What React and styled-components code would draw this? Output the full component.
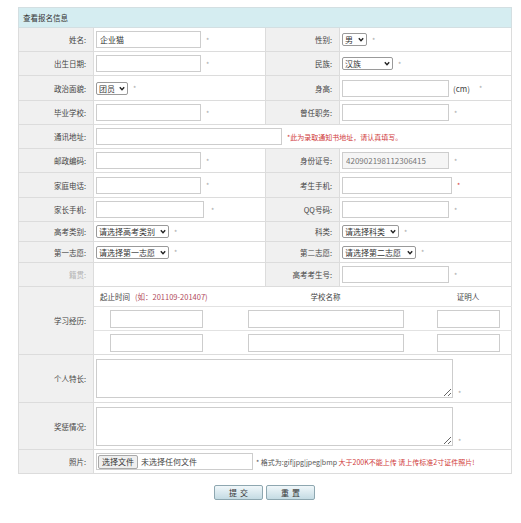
import React from 'react';
import styled, { createGlobalStyle } from 'styled-components';

const Global = createGlobalStyle`
  html, body { margin: 0; padding: 0; background: #fff; }
  body { font-family: "Noto Sans CJK SC", "Noto Sans", sans-serif; }
`;

const Page = styled.div`
  padding: 7px 10px 0 18px;
  width: 493px;
`;

const Form = styled.table`
  width: 493px;
  border-collapse: collapse;
  table-layout: fixed;
  border: 1px solid #d9d9d9;
  font-size: 7.5px;
  color: #444;
`;

const Row = styled.tr`
  height: ${p => p.$h || 24}px;
`;

const Caption = styled.td`
  background: #d5edf1;
  padding: 0 0 0 4px;
  border: 1px solid #d3dfe2;
  color: #333;
  font-size: 7.5px;
  text-align: left;
`;

const Label = styled.th`
  background: #f0f0f0;
  text-align: right;
  font-weight: normal;
  padding: 0 7px 0 0;
  border: 1px solid #dcdcdc;
  color: ${p => (p.$faint ? '#b5b5b5' : '#444')};
  white-space: nowrap;
  font-size: 7.5px;
`;

const Cell = styled.td`
  padding: ${p => (p.$flush ? '0' : '0 0 0 2px')};
  border: 1px solid #dcdcdc;
  background: #fff;
  white-space: nowrap;
  vertical-align: middle;
`;

const Input = styled.input`
  box-sizing: border-box;
  width: ${p => p.$w || 105}px;
  height: ${p => p.$ht || 17}px;
  border: 1px solid #cdcdcd;
  font: 8px "Noto Sans CJK SC", "Noto Sans", sans-serif;
  padding: 0 3px;
  margin: 0;
  color: ${p => (p.$ro ? '#777' : '#333')};
  background: ${p => (p.$ro ? '#f5f5f5' : '#fff')};
  vertical-align: middle;
  outline: none;
`;

const SelectWrap = styled.span`
  position: relative;
  display: inline-block;
  vertical-align: middle;
  height: 13px;
`;

const SelectBox = styled.select`
  appearance: none;
  -webkit-appearance: none;
  box-sizing: border-box;
  width: ${p => p.$w}px;
  height: 13px;
  font: 8px/11px "Noto Sans CJK SC", "Noto Sans", sans-serif;
  color: #333;
  border: 1px solid #9a9a9a;
  border-radius: 2px;
  background: #fff;
  padding: 0 10px 0 2px;
  margin: 0;
  display: block;
  outline: none;
`;

const Chevron = styled.svg`
  position: absolute;
  right: 3px;
  top: 4px;
  width: 6px;
  height: 5px;
  pointer-events: none;
`;

function Select({ w, value }) {
  return (
    <SelectWrap>
      <SelectBox $w={w} defaultValue={value}>
        <option>{value}</option>
      </SelectBox>
      <Chevron viewBox="0 0 6 5">
        <path d="M0.8 1.2 L3 3.6 L5.2 1.2" fill="none" stroke="#222" strokeWidth="1.4" />
      </Chevron>
    </SelectWrap>
  );
}

const Star = styled.span`
  color: ${p => (p.$red ? '#d63a3a' : '#a8a8a8')};
  margin-left: ${p => (p.$ml != null ? p.$ml : 5)}px;
  font-size: 7px;
  vertical-align: middle;
`;

const Unit = styled.span`
  margin-left: 4px;
  font-size: 8px;
  color: #444;
  vertical-align: middle;
`;

const Note = styled.span`
  margin-left: ${p => p.$ml || 0}px;
  color: ${p => (p.$red ? '#d03a3a' : '#555')};
  font-size: 7px;
  vertical-align: middle;
`;

const Study = styled.div`
  display: grid;
  grid-template-columns: 133px 197px 88px;
  grid-template-rows: 20px 24px 23px;
`;

const StudyHead = styled.div`
  display: flex;
  align-items: center;
  justify-content: ${p => (p.$left ? 'flex-start' : 'center')};
  padding-left: ${p => (p.$left ? '6px' : '0')};
  border-bottom: 1px solid #e2e2e2;
  font-size: 7.5px;
  color: #444;
`;

const Hint = styled.span`
  color: #b04a5a;
  margin-left: 5px;
`;

const StudyCellBox = styled.div`
  display: flex;
  align-items: center;
  justify-content: ${p => (p.$start ? 'flex-start' : 'center')};
  padding-left: ${p => p.$pl || 0}px;
  border-bottom: ${p => (p.$last ? 'none' : '1px solid #e2e2e2')};
`;

const TextBox = styled.textarea`
  box-sizing: border-box;
  width: 357px;
  height: 39px;
  border: 1px solid #cdcdcd;
  margin: 0;
  padding: 2px;
  font: 8px "Noto Sans CJK SC", sans-serif;
  vertical-align: bottom;
  resize: both;
`;

const FileBox = styled.span`
  display: inline-flex;
  align-items: center;
  box-sizing: border-box;
  width: 157px;
  height: 17px;
  border: 1px solid #cdcdcd;
  vertical-align: middle;
  padding-left: 1px;
  font-size: 8px;
  color: #444;
`;

const FileBtn = styled.span`
  box-sizing: border-box;
  height: 14px;
  line-height: 12px;
  padding: 0 3px;
  border: 1px solid #a9a9a9;
  border-radius: 2px;
  background: #efefef;
  color: #333;
  margin-right: 3px;
`;

const Actions = styled.div`
  display: flex;
  justify-content: center;
  gap: 3px;
  width: 493px;
  margin-top: 11px;
`;

const Btn = styled.button`
  box-sizing: border-box;
  width: 49px;
  height: 15px;
  padding: 0;
  border: 1px solid #8ea7b0;
  border-radius: 2px;
  background: linear-gradient(#f0f7fa, #c4dbe3);
  font: 8px "Noto Sans CJK SC", sans-serif;
  color: #333;
  letter-spacing: 3px;
  text-indent: 3px;
`;

export default function App() {
  return (
    <Page>
      <Global />
      <Form>
        <colgroup>
          <col style={{ width: 75 }} />
          <col style={{ width: 172 }} />
          <col style={{ width: 74 }} />
          <col style={{ width: 172 }} />
        </colgroup>
        <tbody>
          <Row $h={20}>
            <Caption colSpan={4}>查看报名信息</Caption>
          </Row>
          <Row>
            <Label>姓名:</Label>
            <Cell><Input defaultValue="企业猫" /><Star>*</Star></Cell>
            <Label>性别:</Label>
            <Cell><Select w={25} value="男" /><Star>*</Star></Cell>
          </Row>
          <Row>
            <Label>出生日期:</Label>
            <Cell><Input /><Star>*</Star></Cell>
            <Label>民族:</Label>
            <Cell><Select w={51} value="汉族" /><Star>*</Star></Cell>
          </Row>
          <Row $h={25}>
            <Label>政治面貌:</Label>
            <Cell><Select w={32} value="团员" /><Star>*</Star></Cell>
            <Label>身高:</Label>
            <Cell><Input $w={107} /><Unit>(cm)</Unit><Star $ml={9}>*</Star></Cell>
          </Row>
          <Row>
            <Label>毕业学校:</Label>
            <Cell><Input /><Star>*</Star></Cell>
            <Label>曾任职务:</Label>
            <Cell><Input $w={107} /><Star>*</Star></Cell>
          </Row>
          <Row>
            <Label>通讯地址:</Label>
            <Cell colSpan={3}>
              <Input $w={186} />
              <Note $red $ml={5}>*此为录取通知书地址，请认真填写。</Note>
            </Cell>
          </Row>
          <Row>
            <Label>邮政编码:</Label>
            <Cell><Input /><Star>*</Star></Cell>
            <Label>身份证号:</Label>
            <Cell><Input $w={107} $ro readOnly defaultValue="420902198112306415" /><Star>*</Star></Cell>
          </Row>
          <Row $h={25}>
            <Label>家庭电话:</Label>
            <Cell><Input /><Star>*</Star></Cell>
            <Label>考生手机:</Label>
            <Cell><Input $w={110} /><Star $red>*</Star></Cell>
          </Row>
          <Row>
            <Label>家长手机:</Label>
            <Cell><Input $w={108} /><Star $ml={7}>*</Star></Cell>
            <Label>QQ号码:</Label>
            <Cell><Input $w={107} /><Star>*</Star></Cell>
          </Row>
          <Row $h={20}>
            <Label>高考类别:</Label>
            <Cell><Select w={73} value="请选择高考类别" /><Star>*</Star></Cell>
            <Label>科类:</Label>
            <Cell><Select w={57} value="请选择科类" /><Star>*</Star></Cell>
          </Row>
          <Row $h={21}>
            <Label>第一志愿:</Label>
            <Cell><Select w={73} value="请选择第一志愿" /><Star>*</Star></Cell>
            <Label>第二志愿:</Label>
            <Cell><Select w={74} value="请选择第二志愿" /><Star>*</Star></Cell>
          </Row>
          <Row>
            <Label $faint>籍贯:</Label>
            <Cell />
            <Label>高考考生号:</Label>
            <Cell><Input $w={107} /><Star>*</Star></Cell>
          </Row>
          <Row $h={67}>
            <Label>学习经历:</Label>
            <Cell colSpan={3} $flush>
              <Study>
                <StudyHead $left>起止时间<Hint>(如：201109-201407)</Hint></StudyHead>
                <StudyHead>学校名称</StudyHead>
                <StudyHead>证明人</StudyHead>
                <StudyCellBox $start $pl={16}><Input $w={93} $ht={18} /></StudyCellBox>
                <StudyCellBox><Input $w={156} $ht={18} /></StudyCellBox>
                <StudyCellBox><Input $w={63} $ht={18} /></StudyCellBox>
                <StudyCellBox $start $pl={16} $last><Input $w={93} $ht={18} /></StudyCellBox>
                <StudyCellBox $last><Input $w={156} $ht={18} /></StudyCellBox>
                <StudyCellBox $last><Input $w={63} $ht={18} /></StudyCellBox>
              </Study>
            </Cell>
          </Row>
          <Row $h={48}>
            <Label>个人特长:</Label>
            <Cell colSpan={3}><TextBox /><Star>*</Star></Cell>
          </Row>
          <Row $h={47}>
            <Label>奖惩情况:</Label>
            <Cell colSpan={3}><TextBox /><Star>*</Star></Cell>
          </Row>
          <Row>
            <Label>照片:</Label>
            <Cell colSpan={3}>
              <FileBox><FileBtn>选择文件</FileBtn>未选择任何文件</FileBox>
              <Note $ml={3}>* 格式为:gif|jpg|jpeg|bmp </Note>
              <Note $red>大于200K不能上传 请上传标准2寸证件照片!</Note>
            </Cell>
          </Row>
        </tbody>
      </Form>
      <Actions>
        <Btn>提交</Btn>
        <Btn>重置</Btn>
      </Actions>
    </Page>
  );
}
